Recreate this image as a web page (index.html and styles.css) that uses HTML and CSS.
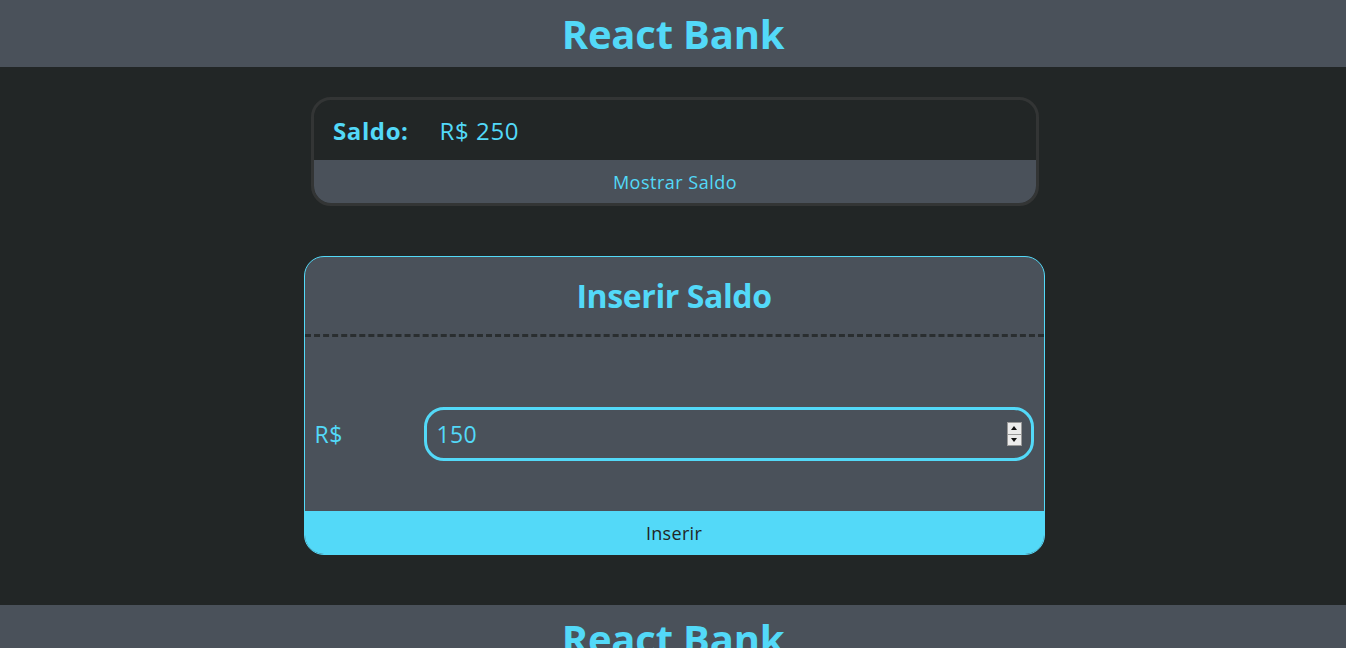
FILE: index.html
```html
<!DOCTYPE html>
<html lang="pt-BR">
<head>
<meta charset="utf-8">
<title>React Bank</title>
<link rel="stylesheet" href="styles.css">
</head>
<body>
<header class="topbar"><h1 class="brand">React Bank</h1></header>
<main class="content">
  <section class="balance-card">
    <div class="balance-row">
      <span class="balance-label">Saldo:</span>
      <span class="balance-value">R$ 250</span>
    </div>
    <button class="balance-toggle" type="button">Mostrar Saldo</button>
  </section>
  <section class="deposit-card">
    <h2 class="deposit-title">Inserir Saldo</h2>
    <div class="deposit-form">
      <label class="deposit-label" for="valor">R$</label>
      <div class="input-wrap">
        <input class="deposit-input" id="valor" type="number" value="150">
        <span class="spinner" aria-hidden="true">
          <span class="spin-btn"><span class="tri-up"></span></span>
          <span class="spin-btn"><span class="tri-down"></span></span>
        </span>
      </div>
    </div>
    <button class="deposit-button" type="button">Inserir</button>
  </section>
</main>
<footer class="topbar"><h1 class="brand">React Bank</h1></footer>
</body>
</html>
```
FILE: styles.css
```css
* { box-sizing: border-box; }
html, body { margin: 0; padding: 0; }
body {
  background: #222626;
  font-family: "Open Sans", "Noto Sans", sans-serif;
  color: #53d9f8;
}
.topbar {
  background: #4a515a;
  height: 67px;
  display: flex;
  justify-content: center;
  align-items: center;
}
.brand {
  margin: 0;
  font-size: 40px;
  font-weight: 700;
  color: #53d9f8;
  letter-spacing: -0.2px;
}
.content {
  display: flex;
  flex-direction: column;
  align-items: center;
  padding: 30px 0 50px;
}
.balance-card {
  width: 728px;
  border: 3px solid #333535;
  border-radius: 20px;
  overflow: hidden;
  margin-left: 4px;
}
.balance-row {
  height: 60px;
  display: flex;
  align-items: center;
  padding-left: 19px;
  gap: 31px;
}
.balance-label { font-size: 24px; font-weight: 700; letter-spacing: 0.6px; }
.balance-value { font-size: 24px; letter-spacing: 0.6px; }
.balance-toggle {
  display: block;
  width: 100%;
  height: 43px;
  border: 0;
  background: #4a515a;
  color: #53d9f8;
  font-family: inherit;
  font-size: 18px;
  letter-spacing: 0.5px;
  padding: 0;
}
.deposit-card {
  margin-top: 50px;
  margin-left: 2px;
  width: 741px;
  height: 299px;
  border: 1px solid #53d9f8;
  border-radius: 20px;
  background: #4a515a;
  overflow: hidden;
  display: flex;
  flex-direction: column;
}
.deposit-title {
  margin: 0;
  height: 80px;
  display: flex;
  align-items: center;
  justify-content: center;
  font-size: 32px;
  font-weight: 700;
  letter-spacing: -0.4px;
  border-bottom: 3px dashed #2a2e30;
}
.deposit-form {
  flex: 1;
  display: flex;
  align-items: center;
  padding: 20px 10px 0 10px;
}
.deposit-label {
  width: 109px;
  font-size: 23px;
  letter-spacing: 0.5px;
}
.input-wrap {
  flex: 1;
  position: relative;
  display: flex;
}
.deposit-input {
  flex: 1;
  height: 54px;
  border: 3px solid #53d9f8;
  border-radius: 20px;
  background: #4a515a;
  color: #53d9f8;
  font-family: inherit;
  font-size: 23px;
  letter-spacing: 0.3px;
  padding: 0 8px 0 10px;
  outline: none;
  -moz-appearance: textfield;
}
.deposit-input::-webkit-inner-spin-button,
.deposit-input::-webkit-outer-spin-button {
  -webkit-appearance: none;
  margin: 0;
}
.spinner {
  position: absolute;
  right: 12px;
  top: 15px;
  width: 15px;
  height: 24px;
  border: 1px solid #9a9a9a;
  background: #9a9a9a;
  display: flex;
  flex-direction: column;
  gap: 1px;
}
.spin-btn {
  flex: 1;
  background: #ececec;
  display: flex;
  align-items: center;
  justify-content: center;
}
.tri-up, .tri-down {
  width: 0;
  height: 0;
  border-left: 3px solid transparent;
  border-right: 3px solid transparent;
}
.tri-up { border-bottom: 4px solid #111; }
.tri-down { border-top: 4px solid #111; }
.deposit-button {
  height: 43px;
  border: 0;
  background: #53d9f8;
  color: #222626;
  font-family: inherit;
  font-size: 18px;
  padding: 0;
  letter-spacing: 0.3px;
}
```
